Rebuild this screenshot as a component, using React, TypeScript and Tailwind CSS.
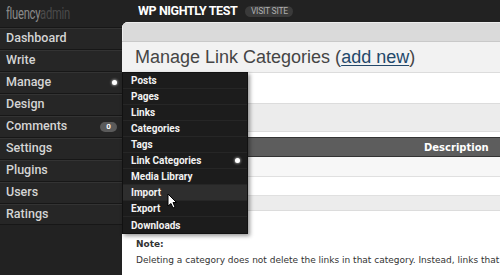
const nav = ["Dashboard", "Write", "Manage", "Design", "Comments", "Settings", "Plugins", "Users", "Ratings"];
const sub = ["Posts", "Pages", "Links", "Categories", "Tags", "Link Categories", "Media Library", "Import", "Export", "Downloads"];

function Submenu() {
  return (
    <div className="absolute left-full top-0 z-10 w-[126px] border border-[#111] bg-[#1c1c1c] font-['Roboto',sans-serif] shadow-[2px_2px_4px_rgba(0,0,0,0.4)]">
      {sub.map((s) => (
        <div
          key={s}
          className={`relative flex h-[16px] items-center border-b border-[#262626] pl-[8px] text-[10px] font-bold text-[#f2f2f2] last:border-b-0 ${
            s === "Import" ? "bg-[#2e2e2e]" : ""
          }`}
        >
          {s}
          {s === "Link Categories" && (
            <span className="ml-auto mr-[7px] h-[5px] w-[5px] rounded-full bg-white shadow-[0_0_3px_#fff]" />
          )}
          {s === "Import" && (
            <svg className="absolute left-[44px] top-[8px]" width="11" height="16" viewBox="0 0 11 16">
              <path d="M1 1 L1 13 L4 10.5 L6 15 L8 14 L6 9.5 L9.5 9.5 Z" fill="#fff" stroke="#000" strokeWidth="1" strokeLinejoin="round" />
            </svg>
          )}
        </div>
      ))}
    </div>
  );
}

export default function App() {
  return (
    <div className="flex h-[275px] w-[500px] overflow-hidden bg-[#222] font-['Roboto',sans-serif]">
      <aside className="flex w-[122px] shrink-0 flex-col">
        <div className="h-[27px] pl-[6px] pt-[3px]">
          <div className="origin-left scale-x-[0.66] whitespace-nowrap text-[17px] leading-[20px] tracking-tight">
            <span className="text-[#8a8a8a]">fluency</span>
            <span className="text-[#4a4a4a]">admin</span>
          </div>
        </div>
        <ul className="bg-[#262626]">
          {nav.map((n) => (
            <li
              key={n}
              className="relative flex h-[22px] items-center border-t border-t-[#171717] pl-[6px] text-[12.5px] font-medium text-[#d4d4d4] shadow-[inset_0_1px_0_#333] last:border-b last:border-b-[#171717]"
            >
              {n}
              {n === "Manage" && (
                <>
                  <span className="ml-auto mr-[5px] h-[5px] w-[5px] rounded-full bg-white shadow-[0_0_3px_#fff]" />
                  <Submenu />
                </>
              )}
              {n === "Comments" && (
                <span className="ml-auto mr-[5px] flex h-[10px] w-[17px] items-center justify-center rounded-full bg-[#5a5a5a] text-[8px] font-bold leading-none text-white">
                  0
                </span>
              )}
            </li>
          ))}
        </ul>
      </aside>

      <div className="flex min-w-0 flex-1 flex-col">
        <header className="flex h-[22px] shrink-0 items-center gap-[8px] pl-[16px]">
          <span className="text-[12.5px] font-bold tracking-[-0.4px] text-white">WP NIGHTLY TEST</span>
          <span className="flex h-[11px] w-[48px] items-center justify-center rounded-full bg-[#3a3a3a] text-[8.5px] tracking-tight text-[#b0b0b0]">
            VISIT SITE
          </span>
        </header>

        <main className="flex-1 overflow-hidden rounded-tl-[6px] bg-white">
          <div className="h-[20px] border-b border-[#c9c9c9] bg-[#dadada] shadow-[inset_1px_1px_0_#ececec]" />
          <div className="flex h-[31px] items-center border-b border-[#dcdcdc] bg-[#f2f2f2] pl-[13px] font-['Liberation_Sans',sans-serif] text-[18px] text-[#454545]">
            Manage Link Categories (<span className="text-[#23486a] underline underline-offset-2">add new</span>)
          </div>
          <div className="h-[30px]" />
          <div className="h-[29px] border-y border-[#dcdcdc] bg-[#ececec]" />
          <div className="h-[5px]" />
          <div className="flex h-[20px] items-center border-y border-[#333] bg-[#5d5d5d] pl-[302px] font-['DejaVu_Sans',sans-serif] text-[10px] font-bold text-white">
            Description
          </div>
          <div className="h-[20px] border-b border-[#e0e0e0] bg-[#f7f7f7]" />
          <div className="h-[19px] border-b border-[#e0e0e0] bg-white" />
          <div className="h-[15px] border-b border-[#dcdcdc] bg-[#ececec]" />
          <div className="pl-[14px] pt-[25px] font-['DejaVu_Sans',sans-serif] text-[9px] leading-[16px] text-[#333]">
            <div className="font-bold">Note:</div>
            <div className="whitespace-nowrap">
              Deleting a category does not delete the links in that category. Instead, links that were only assigned to the deleted category are set to the default category.
            </div>
          </div>
        </main>
      </div>
    </div>
  );
}
